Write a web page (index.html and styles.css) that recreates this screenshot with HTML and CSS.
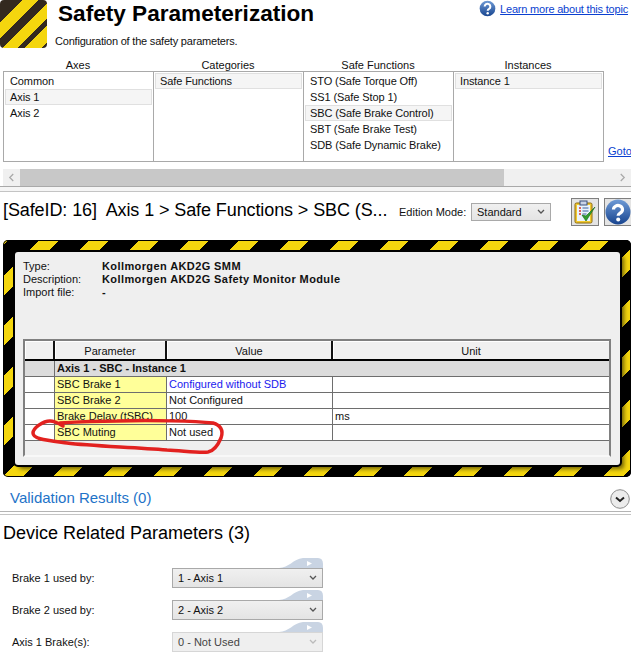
FILE: index.html
```html
<!DOCTYPE html>
<html lang="en">
<head>
  <meta charset="UTF-8" />
  <title>Safety Parameterization</title>
  <link rel="stylesheet" href="styles.css">
</head>
<body>

<header class="top">
  <div class="logo"></div>
  <div class="heading">
    <h1>Safety Parameterization</h1>
    <p>Configuration of the safety parameters.</p>
  </div>
  <a class="learn" href="#">
    <svg class="learn-icon" viewBox="0 0 18 18" width="17" height="17">
      <defs>
        <linearGradient id="blueBall" x1="0" y1="0" x2="0" y2="1">
          <stop offset="0" stop-color="#6f9bd6"/>
          <stop offset="1" stop-color="#17448f"/>
        </linearGradient>
      </defs>
      <circle cx="9" cy="9" r="8.3" fill="url(#blueBall)"/>
      <path d="M6 7a3 3 0 1 1 4.600 2.500c-1 .6-1.400 1-1.400 2" fill="none" stroke="#fff" stroke-width="2.200"/>
      <circle cx="9.200" cy="14" r="1.300" fill="#fff"/>
    </svg>
    <span>Learn more about this topic</span>
  </a>
</header>

<section class="selectors">
  <div class="col">
    <div class="col-title">Axes</div>
    <ul class="list">
      <li>Common</li>
      <li class="sel">Axis 1</li>
      <li>Axis 2</li>
    </ul>
  </div>
  <div class="col">
    <div class="col-title">Categories</div>
    <ul class="list">
      <li class="sel">Safe Functions</li>
    </ul>
  </div>
  <div class="col">
    <div class="col-title">Safe Functions</div>
    <ul class="list">
      <li>STO (Safe Torque Off)</li>
      <li>SS1 (Safe Stop 1)</li>
      <li class="sel">SBC (Safe Brake Control)</li>
      <li>SBT (Safe Brake Test)</li>
      <li>SDB (Safe Dynamic Brake)</li>
    </ul>
  </div>
  <div class="col">
    <div class="col-title">Instances</div>
    <ul class="list">
      <li class="sel">Instance 1</li>
    </ul>
  </div>
  <a class="goto" href="#">Goto</a>
</section>

<div class="hscroll">
  <div class="hscroll-btn">
    <svg viewBox="0 0 8 10" width="7" height="9"><path d="M6 1 2 5l4 4" fill="none" stroke="#a8a8a8" stroke-width="1.400"/></svg>
  </div>
  <div class="hscroll-thumb"></div>
  <div class="hscroll-btn right">
    <svg viewBox="0 0 8 10" width="7" height="9"><path d="M2 1l4 4-4 4" fill="none" stroke="#a8a8a8" stroke-width="1.400"/></svg>
  </div>
</div>

<section class="crumb">
  <div class="crumb-text">[SafeID: 16]&nbsp; Axis 1 &gt; Safe Functions &gt; SBC (S...</div>
  <label class="edition">Edition Mode:</label>
  <div class="combo combo-std">
    <span>Standard</span>
    <svg viewBox="0 0 8 6" width="8" height="6"><path d="M1 1l3 3 3-3" fill="none" stroke="#555" stroke-width="1.300"/></svg>
  </div>
  <button class="tool">
    <svg viewBox="0 0 24 24" width="24" height="24">
      <rect x="2" y="3" width="17" height="20" rx="1.500" fill="#f3c92e" stroke="#8a6a10"/>
      <rect x="4" y="5" width="13" height="16" fill="#eaf4fb"/>
      <rect x="7" y="1" width="7" height="4" fill="#c9d3e6" stroke="#39507f"/>
      <path d="M6 8h2M6 11h2M6 14h2" stroke="#d8322a" stroke-width="1.400"/>
      <path d="M9.500 8h6M9.500 11h6M9.500 14h4" stroke="#3a5fa0" stroke-width="1.200"/>
      <path d="M9 15l4 6 9-14-9 9z" fill="#2f9e2f" stroke="#1c6f1c" stroke-width=".7"/>
    </svg>
  </button>
  <button class="tool">
    <svg viewBox="0 0 26 26" width="26" height="26">
      <circle cx="13" cy="13" r="12.500" fill="url(#blueBall)"/>
      <path d="M8.500 10.500a4.500 4 0 1 1 7 3.300c-1.500 1-2.400 1.400-2.400 3" fill="none" stroke="#fff" stroke-width="3.200"/>
      <circle cx="13.200" cy="20.500" r="2" fill="#fff"/>
    </svg>
  </button>
</section>

<section class="hazard">
  <div class="panel">
    <dl class="info">
      <dt>Type:</dt><dd>Kollmorgen AKD2G SMM</dd>
      <dt>Description:</dt><dd>Kollmorgen AKD2G Safety Monitor Module</dd>
      <dt>Import file:</dt><dd>-</dd>
    </dl>
    <div class="grid">
      <div class="row head">
        <div class="c0"></div>
        <div class="c1">Parameter</div>
        <div class="c2">Value</div>
        <div class="c3">Unit</div>
      </div>
      <div class="row group">
        <div class="c0"></div>
        <div class="c-group">Axis 1 - SBC - Instance 1</div>
      </div>
      <div class="row">
        <div class="c0"></div>
        <div class="c1">SBC Brake 1</div>
        <div class="c2 changed">Configured without SDB</div>
        <div class="c3"></div>
      </div>
      <div class="row">
        <div class="c0"></div>
        <div class="c1">SBC Brake 2</div>
        <div class="c2">Not Configured</div>
        <div class="c3"></div>
      </div>
      <div class="row">
        <div class="c0"></div>
        <div class="c1">Brake Delay (tSBC)</div>
        <div class="c2">100</div>
        <div class="c3">ms</div>
      </div>
      <div class="row">
        <div class="c0"></div>
        <div class="c1">SBC Muting</div>
        <div class="c2">Not used</div>
        <div class="c3"></div>
      </div>
    </div>
  </div>
</section>

<!-- red marker drawn over the screenshot -->
<svg class="scribble" viewBox="0 0 631 672" width="631" height="672">
  <path d="M63 426 C58 423 55 421 50 421 C43 421 33 428 33 433 C33 439 45 440 67 443 C90 446 130 447 167 450 C185 451 200 453 208 452 C214 451 218 445 221 438 C224 430 220 425 213 423 C195 421 150 420 117 421 C95 421 75 422 60 423" fill="none"/>
</svg>

<section class="validation">
  <span class="validation-text">Validation Results (0)</span>
  <svg class="validation-icon" viewBox="0 0 20 20" width="20" height="20">
    <circle cx="10" cy="10" r="9.300" fill="#ececec" stroke="#8c8c8c"/>
    <path d="M6 8.500l4 3.500 4-3.500" fill="none" stroke="#222" stroke-width="2"/>
  </svg>
</section>

<section class="device">
  <h2>Device Related Parameters (3)</h2>
  <div class="field">
    <label>Brake 1 used by:</label>
    <div class="combo-wrap">
      <svg class="tab" viewBox="0 0 44 10" width="44" height="10"><path d="M0 10C10 10 14 1 24 0H39Q44 0 44 6V10Z" fill="#c9d4e3"/><path d="M28 3l5 2.500-5 2.500z" fill="#fff"/></svg>
      <div class="combo combo-dev">
        <span>1 - Axis 1</span>
        <svg viewBox="0 0 8 6" width="8" height="6"><path d="M1 1l3 3 3-3" fill="none" stroke="#555" stroke-width="1.300"/></svg>
      </div>
    </div>
  </div>
  <div class="field">
    <label>Brake 2 used by:</label>
    <div class="combo-wrap">
      <svg class="tab" viewBox="0 0 44 10" width="44" height="10"><path d="M0 10C10 10 14 1 24 0H39Q44 0 44 6V10Z" fill="#c9d4e3"/><path d="M28 3l5 2.500-5 2.500z" fill="#fff"/></svg>
      <div class="combo combo-dev">
        <span>2 - Axis 2</span>
        <svg viewBox="0 0 8 6" width="8" height="6"><path d="M1 1l3 3 3-3" fill="none" stroke="#555" stroke-width="1.300"/></svg>
      </div>
    </div>
  </div>
  <div class="field">
    <label>Axis 1 Brake(s):</label>
    <div class="combo-wrap">
      <svg class="tab" viewBox="0 0 44 10" width="44" height="10"><path d="M0 10C10 10 14 1 24 0H39Q44 0 44 6V10Z" fill="#c9d4e3"/><path d="M28 3l5 2.500-5 2.500z" fill="#fff"/></svg>
      <div class="combo combo-dev off">
        <span>0 - Not Used</span>
        <svg viewBox="0 0 8 6" width="8" height="6"><path d="M1 1l3 3 3-3" fill="none" stroke="#bbb" stroke-width="1.300"/></svg>
      </div>
    </div>
  </div>
</section>

</body>
</html>
```

FILE: styles.css
```css
* { box-sizing: border-box; }
html, body { height: 672px; overflow: hidden; }
body {
  margin: 0;
  background: white;
  color: #111;
  font-family: "Liberation Sans", Arial, sans-serif;
  font-size: 11px;
  position: relative;
}

.top { display: flex; height: 58px; }
.logo {
  width: 47px; height: 48px; border-radius: 4px; flex: none;
  background: linear-gradient(135deg, #33291f 0 16px, #f4d60e 16px 27px, #33291f 27px 35.500px, #f4d60e 35.500px 46.500px, #33291f 46.500px 51px, #f4d60e 51px 63px, #33291f 63px);
}
.heading { margin-left: 8px; }
.heading h1 { margin: 1px 0 0 3px; font-size: 22.600px; line-height: 26px; color: black; white-space: nowrap; }
.heading p { margin: 7px 0 0; font-size: 11px; letter-spacing: -.2px; line-height: 14px; }
.learn { position: absolute; right: 3px; top: 0; display: flex; align-items: center; gap: 4px; font-size: 11px; letter-spacing: -.2px; color: #0a3fd0; }
.learn-icon { flex: none; }

.selectors { display: flex; padding-left: 3px; position: relative; }
.col { width: 150px; }
.col-title { text-align: center; height: 13px; padding-top: 1px; line-height: 13px; font-size: 11px; }
.list {
  list-style: none; margin: 0 -1px 0 0; padding: 1px;
  height: 91px;
  border: 1px solid #a9a9a9;
}
.list li { height: 16px; line-height: 14px; padding-left: 4px; font-size: 11px; letter-spacing: -.1px; white-space: nowrap; border: 1px solid transparent; }
.list li.sel { background: #f5f5f5; border-color: #e0e0e0; }
.goto { position: absolute; left: 608px; top: 87px; color: #0a3fd0; font-size: 11px; }

.hscroll {
  display: flex; align-items: stretch;
  height: 17px; margin: 7px 0 0 3px;
  background: #f0f0f0;
}
.hscroll-btn { width: 17px; display: flex; align-items: center; justify-content: center; }
.hscroll-btn.right { margin-left: auto; width: 18px; }
.hscroll-thumb { width: 484px; background: #c8c8c8; }

.crumb {
  display: flex; align-items: center;
  height: 54px; padding: 0 0 4px 3px;
  border-top: 1px solid #a9a9a9;
  position: relative;
}
.crumb::before {
  content: ""; position: absolute; left: 0; right: 0; top: 0; height: 4px;
  background: #f5f5f5; border-bottom: 1px solid #c4c4c4;
}
.crumb-text { flex: none; width: 396px; margin-bottom: 2px; font-size: 18px; letter-spacing: -.1px; color: black; white-space: nowrap; }
.edition { flex: none; width: 72px; font-size: 11px; }
.combo {
  display: flex; align-items: center; justify-content: space-between;
  background: linear-gradient(#f0f0f0, #e4e4e4);
  border: 1px solid #a9a9a9;
}
.combo-std { flex: none; width: 80px; height: 18px; padding: 0 5px 0 5px; font-size: 11px; margin-right: 20px; }
.tool {
  flex: none; width: 28px; height: 28px; padding: 0; margin: 0 5px 0 0;
  background: #e4e4e4; border: 1px solid #7f7f7f;
  display: flex; align-items: center; justify-content: center;
}

.hazard {
  margin: 0 0 0 3px; height: 237px; padding: 12px 11px 12px 12px;
  border-radius: 5px;
  box-shadow: inset 0 0 0 1px black;
  background: repeating-linear-gradient(135deg, #f4d60e 0 4.240px, black 4.240px 25.460px, #f4d60e 25.460px 35.360px);
  position: relative;
}
.panel {
  height: 213px; background: #efefef;
  border-radius: 3px;
  box-shadow: 0 0 0 2px black, 4px 4px 4px rgba(0,0,0,.55);
  padding: 8px 9px 0 8px;
}
.info {
  display: grid; grid-template-columns: 79px 1fr; align-content: start;
  margin: 0; height: 79px; line-height: 13px; font-size: 11px;
}
.info dd { margin: 0; font-weight: bold; letter-spacing: .4px; }

.grid { border: 2px solid #808080; border-bottom-color: #f8f8f8; height: 118px; background: #efefef; width: 588px; }
.row { display: flex; height: 16px; line-height: 15px; border-bottom: 1px solid #6e6e6e; background: white; font-size: 11px; }
.row > div { padding-left: 2px; white-space: nowrap; border-right: 1px solid #6e6e6e; }
.c0 { width: 30px; }
.c1 { width: 112px; background: #ffff99; }
.c2 { width: 166px; }
.c3 { flex: 1; border-right: none !important; }
.changed { color: #1a1aee; }
.row.head { height: 20px; background: #f0f0f0; border-bottom: 2px solid black; line-height: 20px; }
.row.head > div { text-align: center; background: #f0f0f0; padding: 0; border-right: 2px solid #111; box-shadow: inset 1px 1px 0 white; }
.row.group { background: #dcdcdc; }
.c-group { font-weight: bold; flex: 1; border-right: none !important; }

.scribble { position: absolute; left: 0; top: 0; pointer-events: none; }
.scribble path { stroke: #e2211f; stroke-width: 3.500; stroke-linecap: round; }

.validation {
  display: flex; justify-content: space-between; align-items: center;
  height: 35px; padding: 6px 1px 0 10px;
  font-size: 15px; color: #1e73c8;
  border-bottom: 1px solid #b4b4b4;
}
.validation-icon { margin-top: 4px; }
.device { margin-top: 2px; border-top: 1px solid #c4c4c4; padding-top: 9px; }
.device h2 { margin: 0 0 14px 3px; font-size: 18px; font-weight: normal; line-height: 18px; color: black; }
.field { display: flex; align-items: flex-end; height: 32px; padding-left: 12px; }
.field label { width: 160px; font-size: 11px; line-height: 20px; }
.combo-wrap { width: 151px; position: relative; }
.combo-dev { height: 20px; padding: 0 5px 0 5px; font-size: 11px; }
.combo-dev.off { background: #efefef; border-color: #d6d6d6; color: #444; }
.tab { position: absolute; right: 0; top: -10px; display: block; }
```
